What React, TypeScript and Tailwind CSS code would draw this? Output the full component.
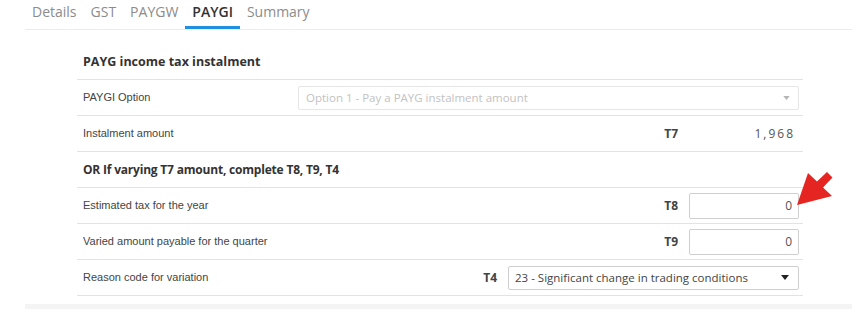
import React from 'react';

const tabs = ['Details', 'GST', 'PAYGW', 'PAYGI', 'Summary'];

const Caret = ({ className }: { className: string }) => (
  <svg viewBox="0 0 8 5" className={className} fill="currentColor">
    <path d="M0 0h8L4 5z" />
  </svg>
);

const Row = ({ label, children }: { label: string; children?: React.ReactNode }) => (
  <div className="flex h-[36px] items-center border-b border-[#e3e3e3] pl-[6px] pr-[4px]">
    <span className="flex-1 text-[11px] text-[#444] font-['Liberation_Sans',Arial,sans-serif]">{label}</span>
    {children}
  </div>
);

const Code = ({ children }: { children: React.ReactNode }) => (
  <span className="mr-[11px] text-[12px] font-bold text-[#444]">{children}</span>
);

const NumberBox = ({ value }: { value: string }) => (
  <div className="flex h-[26px] w-[110px] items-center justify-end rounded-[2px] border border-[#cfcfcf] bg-white pr-[6px] text-[12px] text-[#555]">
    {value}
  </div>
);

// red annotation arrow pointing at T8
const Arrow = () => (
  <svg
    viewBox="0 0 45 45"
    className="pointer-events-none absolute left-[790px] top-[165px] h-[45px] w-[45px]"
  >
    <polygon
      fill="#e52521"
      points="7,40 18,8 27,16.5 37,7 42.5,12.5 33,22.5 42,31"
    />
  </svg>
);

export default function App() {
  return (
    <div className="relative h-[322px] w-[861px] bg-white font-['Open_Sans',sans-serif]">
      <div className="flex h-[29px] pl-[25px]">
        {tabs.map((t) => (
          <div
            key={t}
            className={
              t === 'PAYGI'
                ? 'border-b-[3px] border-[#1e8fe1] px-[7px] text-[14px] leading-[24px] font-semibold text-[#333]'
                : 'border-b-[3px] border-transparent px-[7px] text-[14px] leading-[24px] text-[#8c8c8c]'
            }
          >
            {t}
          </div>
        ))}
      </div>

      <div className="ml-[25px] w-[827px] border-t border-[#ececec] pt-[15px] pb-[8px]">
        <div className="ml-[52px] w-[726px]">
          <div className="flex h-[35px] items-center border-b border-[#e3e3e3] pl-[6px] text-[12.5px] font-bold text-[#333]">
            PAYG income tax instalment
          </div>
          <Row label="PAYGI Option">
            <div className="flex h-[24px] w-[501px] items-center justify-between rounded-[2px] border border-[#e6e6e6] pl-[7px] pr-[8px] text-[11.5px] text-[#c2c2c2]">
              <span>Option 1 - Pay a PAYG instalment amount</span>
              <Caret className="h-[4px] w-[7px] text-[#b5b5b5]" />
            </div>
          </Row>
          <Row label="Instalment amount">
            <Code>T7</Code>
            <div className="w-[110px] pr-[4px] text-right text-[12px] tracking-[2px] text-[#555]">1,968</div>
          </Row>
          <div className="flex h-[36px] items-center border-b border-[#e3e3e3] pl-[6px] text-[12px] tracking-[-0.2px] font-bold text-[#333]">
            OR If varying T7 amount, complete T8, T9, T4
          </div>
          <Row label="Estimated tax for the year">
            <Code>T8</Code>
            <NumberBox value="0" />
          </Row>
          <Row label="Varied amount payable for the quarter">
            <Code>T9</Code>
            <NumberBox value="0" />
          </Row>
          <Row label="Reason code for variation">
            <Code>T4</Code>
            <div className="flex h-[24px] w-[291px] items-center justify-between rounded-[2px] border border-[#cfcfcf] pl-[6px] pr-[9px] text-[11.5px] text-[#444]">
              <span>23 - Significant change in trading conditions</span>
              <Caret className="h-[5px] w-[8px] text-[#222]" />
            </div>
          </Row>
        </div>
        <div className="mt-[8px] h-[5px] bg-[#f4f4f4]" />
      </div>
      <Arrow />
    </div>
  );
}
